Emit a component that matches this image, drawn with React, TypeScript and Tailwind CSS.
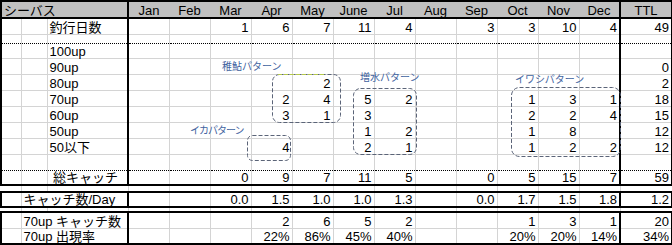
import React from "react";

const months = ["Jan", "Feb", "Mar", "Apr", "May", "June", "Jul", "Aug", "Sep", "Oct", "Nov", "Dec"];

type Bottom = "thin" | "dotted" | "thick";

interface RowDef {
  label?: string;
  wide?: boolean; // label starts in column B
  values: string[]; // 12 months + TTL
  h: string;
  bottom: Bottom;
}

const e = "";

const block1: RowDef[] = [
  { label: "釣行日数", values: [e, e, "1", "6", "7", "11", "4", e, "3", "3", "10", "4", "49"], h: "h-[16px]", bottom: "thin" },
  { values: Array(13).fill(e), h: "h-[9px]", bottom: "dotted" },
  { label: "100up", values: Array(13).fill(e), h: "h-[15px]", bottom: "thin" },
  { label: "90up", values: [e, e, e, e, e, e, e, e, e, e, e, e, "0"], h: "h-[16px]", bottom: "thin" },
  { label: "80up", values: [e, e, e, e, "2", e, e, e, e, e, e, e, "2"], h: "h-[16px]", bottom: "thin" },
  { label: "70up", values: [e, e, e, "2", "4", "5", "2", e, e, "1", "3", "1", "18"], h: "h-[16px]", bottom: "thin" },
  { label: "60up", values: [e, e, e, "3", "1", "3", e, e, e, "2", "2", "4", "15"], h: "h-[16px]", bottom: "thin" },
  { label: "50up", values: [e, e, e, e, e, "1", "2", e, e, "1", "8", e, "12"], h: "h-[16px]", bottom: "thin" },
  { label: "50以下", values: [e, e, e, "4", e, "2", "1", e, e, "1", "2", "2", "12"], h: "h-[16px]", bottom: "thin" },
  { values: Array(13).fill(e), h: "h-[16px]", bottom: "dotted" },
  { label: " 総キャッチ", values: [e, e, "0", "9", "7", "11", "5", e, "0", "5", "15", "7", "59"], h: "h-[15px]", bottom: "thick" },
];

const block2: RowDef[] = [
  { label: "キャッチ数/Day", wide: true, values: [e, e, "0.0", "1.5", "1.0", "1.0", "1.3", e, "0.0", "1.7", "1.5", "1.8", "1.2"], h: "h-[15px]", bottom: "thick" },
];

const block3: RowDef[] = [
  { label: "70up キャッチ数", wide: true, values: [e, e, e, "2", "6", "5", "2", e, e, "1", "3", "1", "20"], h: "h-[16px]", bottom: "thin" },
  { label: "70up 出現率", wide: true, values: [e, e, e, "22%", "86%", "45%", "40%", e, e, "20%", "20%", "14%", "34%"], h: "h-[16px]", bottom: "thick" },
];

function bottomCls(b: Bottom) {
  if (b === "thick") return "border-b-2 border-b-black";
  if (b === "dotted") return "border-b border-b-black [border-bottom-style:dotted]";
  return "border-b border-b-[#d4d4d4]";
}

function DataRow({ row }: { row: RowDef }) {
  const b = bottomCls(row.bottom);
  const cell = "p-0 border-r border-r-[#d4d4d4] whitespace-nowrap align-bottom leading-[11px] overflow-visible " + b;
  return (
    <tr className={row.h}>
      <td className={cell + " border-l-2 border-l-black"}></td>
      {row.wide ? (
        <td colSpan={2} className={"p-0 pl-[2px] pb-[1px] border-r-2 border-r-black whitespace-nowrap align-bottom leading-[11px] " + b}>
          {row.label}
        </td>
      ) : (
        <>
          <td className={cell}></td>
          <td className={"p-0 pl-[2px] pb-[1px] border-r-2 border-r-black whitespace-pre align-bottom leading-[11px] " + b}>{row.label}</td>
        </>
      )}
      {row.values.map((v, i) => (
        <td
          key={i}
          className={
            "p-0 pr-[2px] pb-[1px] text-right whitespace-nowrap align-bottom leading-[11px] " +
            (i >= 11 ? "border-r-2 border-r-black " : "border-r border-r-[#d4d4d4] ") +
            b
          }
        >
          {v}
        </td>
      ))}
    </tr>
  );
}

function GapRow({ h }: { h: string }) {
  return (
    <tr className={h}>
      {Array.from({ length: 16 }).map((_, i) => (
        <td key={i} className="p-0 border-r border-r-[#d4d4d4] border-b-2 border-b-black"></td>
      ))}
    </tr>
  );
}

export default function App() {
  return (
    <div className="relative w-[672px] h-[245px] bg-white overflow-hidden text-[13px] text-black font-['Liberation_Sans','Noto_Sans_CJK_JP',sans-serif]">
      <table className="table-fixed border-collapse w-[671px]">
        <colgroup>
          <col className="w-[20px]" />
          <col className="w-[26px]" />
          <col className="w-[81px]" />
          {months.map((m) => (
            <col key={m} className="w-[41px]" />
          ))}
          <col className="w-[52px]" />
        </colgroup>
        <tbody>
          <tr className="h-[17px] bg-[#c0c0c0]">
            <td colSpan={3} className="p-0 pl-[2px] pb-[1px] border-l-2 border-t-2 border-b-2 border-r-2 border-black whitespace-nowrap leading-[11px] align-bottom">
              シーバス
            </td>
            {months.map((m, i) => (
              <td
                key={m}
                className={
                  "p-0 pb-[1px] text-center border-t-2 border-b-2 border-black leading-[11px] align-bottom " +
                  (i === 11 ? "border-r-2" : "")
                }
              >
                {m}
              </td>
            ))}
            <td className="p-0 pb-[1px] text-center border-t-2 border-b-2 border-r-2 border-black leading-[11px] align-bottom">TTL</td>
          </tr>
          {block1.map((r, i) => (
            <DataRow key={"a" + i} row={r} />
          ))}
          <GapRow h="h-[7px]" />
          {block2.map((r, i) => (
            <DataRow key={"b" + i} row={r} />
          ))}
          <GapRow h="h-[5px]" />
          {block3.map((r, i) => (
            <DataRow key={"c" + i} row={r} />
          ))}
        </tbody>
      </table>

      {/* pattern annotations drawn over the sheet */}
      <svg className="absolute left-0 top-0 pointer-events-none" width="672" height="245">
        <g fill="none" stroke="#5b6478" strokeWidth="1" strokeDasharray="4 2">
          <rect x="272.5" y="74.5" width="68" height="48" rx="7" />
          <rect x="353.5" y="88.5" width="63" height="66" rx="7" />
          <rect x="247.5" y="135.5" width="43" height="25" rx="5" />
          <rect x="511.5" y="87.5" width="109" height="69" rx="8" />
        </g>
        <line x1="278" y1="74.5" x2="326" y2="74.5" stroke="#b5c94a" strokeWidth="1" strokeDasharray="4 2" />
      </svg>
      <div className="absolute left-[222px] top-[60px] text-[10px] leading-[12px] text-[#3f63a0] font-['Noto_Sans_CJK_JP',sans-serif]">稚鮎パターン</div>
      <div className="absolute left-[360px] top-[71px] text-[10px] leading-[12px] text-[#3f63a0] font-['Noto_Sans_CJK_JP',sans-serif]">増水パターン</div>
      <div className="absolute left-[515px] top-[73px] text-[10px] leading-[12px] text-[#3f63a0] font-['Noto_Sans_CJK_JP',sans-serif]">イワシパターン</div>
      <div className="absolute left-[190px] top-[124px] text-[10px] leading-[12px] tracking-[-1px] text-[#3f63a0] font-['Noto_Sans_CJK_JP',sans-serif]">イカパターン</div>
    </div>
  );
}
